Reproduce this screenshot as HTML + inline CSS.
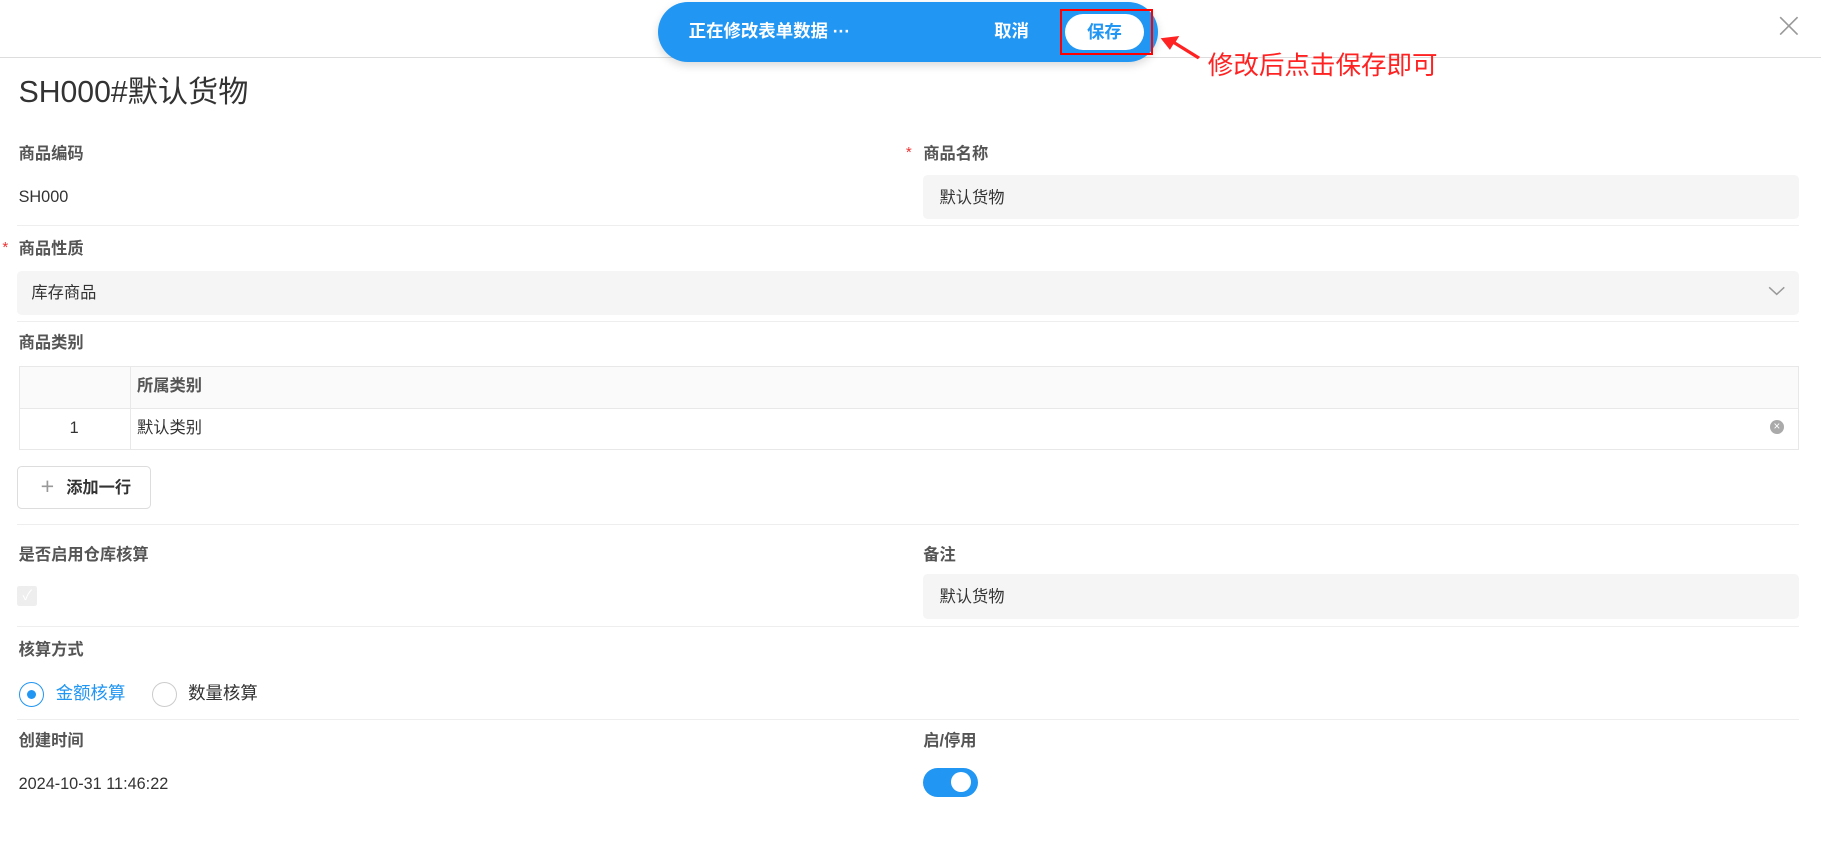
<!DOCTYPE html>
<html><head><meta charset="utf-8"><style>
html,body{margin:0;padding:0;background:#fff;overflow:hidden}
body{width:1821px;height:842px}
#w{position:relative;width:1568px;height:725px;zoom:1.16135;font-family:"Liberation Sans","Noto Sans CJK SC",sans-serif;color:#333}
.a{position:absolute}
.lbl{font-size:14px;color:#555;font-weight:bold;line-height:20px}
.val{font-size:14px;color:#333;line-height:20px}
.hr{position:absolute;height:1px;background:#eee;left:15px;width:1534px}
.inp{position:absolute;background:#f5f5f5;border-radius:4px}
.star{color:#e33;font-size:13px}
</style></head><body><div id="w">
<div class="a" style="left:0;top:49px;width:1568px;height:1px;background:#ddd"></div>
<svg class="a" style="left:1532px;top:14px" width="17" height="17" viewBox="0 0 17 17"><path d="M1 1L16 16M16 1L1 16" stroke="#999" stroke-width="1.4"/></svg>
<div class="a" style="left:567px;top:2px;width:430px;height:51px;background:#2196f3;border-radius:26px;box-shadow:0 3px 8px rgba(0,0,0,.15)"></div>
<div class="a" style="left:593px;top:17px;font-size:15px;font-weight:bold;color:#fff;line-height:20px">正在修改表单数据 ···</div>
<div class="a" style="left:856px;top:17px;font-size:15px;font-weight:bold;color:#fff;line-height:20px">取消</div>
<div class="a" style="left:917px;top:12px;width:68px;height:31px;background:#fff;border-radius:16px;text-align:center;line-height:31px;font-size:15px;font-weight:bold;color:#2196f3">保存</div>
<div class="a" style="left:913px;top:8px;width:76px;height:36px;border:2px solid #f00"></div>
<svg class="a" style="left:995px;top:25px" width="45" height="30"><path d="M4 8L20 6L17 11L38 24L36 26L15 13L12 18Z" fill="#f22"/></svg>
<div class="a" style="left:1040px;top:43px;font-size:22px;color:#f22;line-height:28px">修改后点击保存即可</div>
<div class="a" style="left:16px;top:64px;font-size:26px;color:#333;line-height:32px">SH000#默认货物</div>

<div class="a lbl" style="left:16px;top:123px">商品编码</div>
<div class="a val" style="left:16px;top:160px">SH000</div>
<div class="a star" style="left:780px;top:124px">*</div>
<div class="a lbl" style="left:795px;top:123px">商品名称</div>
<div class="inp" style="left:795px;top:151px;width:754px;height:38px"></div>
<div class="a val" style="left:809px;top:161px">默认货物</div>
<div class="hr" style="top:194px"></div>

<div class="a star" style="left:2px;top:206px">*</div>
<div class="a lbl" style="left:16px;top:205px">商品性质</div>
<div class="inp" style="left:15px;top:233px;width:1534px;height:38px"></div>
<div class="a val" style="left:27px;top:243px">库存商品</div>
<svg class="a" style="left:1522px;top:245px" width="15" height="10"><path d="M1 2L7.5 8L14 2" fill="none" stroke="#999" stroke-width="1.3"/></svg>
<div class="hr" style="top:276px"></div>

<div class="a lbl" style="left:16px;top:286px">商品类别</div>
<div class="a" style="left:16px;top:315px;width:1531px;height:71px;border:1px solid #e8e8e8"></div>
<div class="a" style="left:17px;top:316px;width:1531px;height:35px;background:#fafafa;border-bottom:1px solid #e8e8e8"></div>
<div class="a" style="left:112px;top:316px;width:1px;height:71px;background:#e8e8e8"></div>
<div class="a val" style="left:118px;top:323px;color:#555;font-weight:bold">所属类别</div>
<div class="a val" style="left:60px;top:359px">1</div>
<div class="a val" style="left:118px;top:359px">默认类别</div>
<div class="a" style="left:1524px;top:362px;width:12px;height:12px;border-radius:50%;background:#aaa;color:#fff;font-size:10px;line-height:12px;text-align:center">×</div>
<div class="a" style="left:15px;top:401px;width:113px;height:36px;border:1px solid #ddd;border-radius:4px"></div>
<div class="a" style="left:35px;top:409px;font-size:20px;color:#999;line-height:20px">+</div>
<div class="a val" style="left:57px;top:411px;font-weight:bold">添加一行</div>
<div class="hr" style="top:451px"></div>

<div class="a lbl" style="left:16px;top:468px">是否启用仓库核算</div>
<div class="a" style="left:15px;top:505px;width:17px;height:17px;background:#eee;border-radius:2px;color:#fff;font-size:12px;text-align:center;line-height:17px">✓</div>
<div class="a lbl" style="left:795px;top:468px">备注</div>
<div class="inp" style="left:795px;top:494px;width:754px;height:39px"></div>
<div class="a val" style="left:809px;top:505px">默认货物</div>
<div class="hr" style="top:539px"></div>

<div class="a lbl" style="left:16px;top:550px">核算方式</div>
<div class="a" style="left:16px;top:587px;width:20px;height:20px;border:1px solid #2196f3;border-radius:50%"></div>
<div class="a" style="left:23px;top:594px;width:8px;height:8px;background:#2196f3;border-radius:50%"></div>
<div class="a" style="left:48px;top:586px;font-size:15px;color:#2196f3;line-height:22px">金额核算</div>
<div class="a" style="left:131px;top:587px;width:20px;height:20px;border:1px solid #ccc;border-radius:50%"></div>
<div class="a" style="left:162px;top:586px;font-size:15px;color:#333;line-height:22px">数量核算</div>
<div class="hr" style="top:619px"></div>

<div class="a lbl" style="left:16px;top:629px">创建时间</div>
<div class="a val" style="left:16px;top:666px">2024-10-31 11:46:22</div>
<div class="a lbl" style="left:795px;top:629px">启/停用</div>
<div class="a" style="left:795px;top:661px;width:47px;height:25px;background:#2196f3;border-radius:13px"></div>
<div class="a" style="left:819px;top:665px;width:17px;height:17px;background:#fff;border-radius:50%"></div>
</div></body></html>
